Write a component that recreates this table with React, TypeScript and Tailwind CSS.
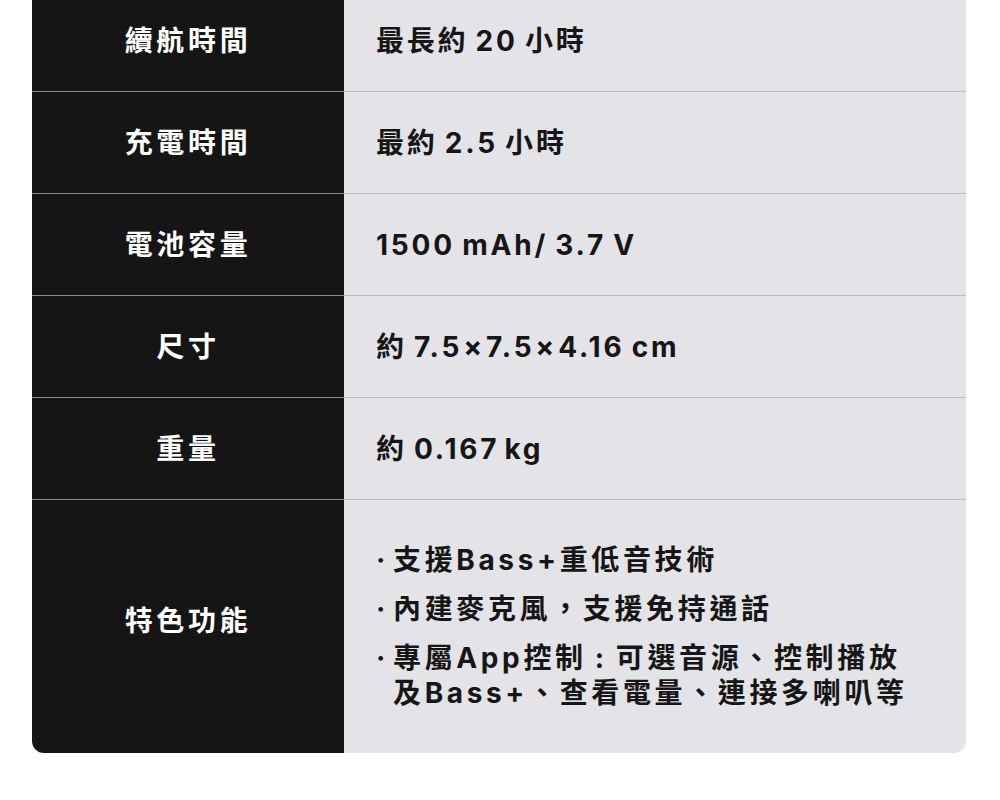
import React from 'react';

interface SpecRow {
  label: string;
  value: React.ReactNode;
}

const Times = () => <span className="mx-[1px]">×</span>;

// thin spaces keep CJK / latin runs apart like the original artwork
const rows: SpecRow[] = [
  { label: '續航時間', value: '最長約\u200920\u2009小時' },
  { label: '充電時間', value: '最約\u20092.5\u2009小時' },
  { label: '電池容量', value: '1500\u2009mAh/\u20093.7\u2009V' },
  {
    label: '尺寸',
    value: (
      <>
        約{'\u2009'}7.5<Times />7.5<Times />4.16{'\u2009'}cm
      </>
    ),
  },
  { label: '重量', value: '約\u20090.167\u200Akg' },
];

const features = [
  ['支援Bass+重低音技術'],
  ['內建麥克風，支援免持通話'],
  ['專屬App控制\u2009:\u2009可選音源、控制播放', '及Bass+、查看電量、連接多喇叭等'],
];

const fontStack = { fontFamily: 'Inter, "Noto Sans CJK TC", sans-serif' };

export default function App() {
  return (
    <div className="w-[1000px] h-[800px] bg-white overflow-hidden" style={fontStack}>
      <div className="w-[934px] ml-8 -mt-[10px] rounded-b-xl overflow-hidden">
        {rows.map((row) => (
          <div key={row.label} className="flex h-[102px]">
            <div className="w-[312px] shrink-0 bg-[#151515] border-b border-[#8d8d8d] flex items-center justify-center text-white text-[28px] font-bold tracking-[0.13em]">
              {row.label}
            </div>
            <div className="flex-1 bg-[#e4e3e7] border-b border-[#bdbcc1] flex items-center pl-8 text-[#161616] text-[28px] font-bold tracking-[0.1em]">
              {row.value}
            </div>
          </div>
        ))}

        {/* Features */}
        <div className="flex h-[253px]">
          <div className="w-[312px] shrink-0 bg-[#151515] flex items-center justify-center pb-[12px] text-white text-[28px] font-bold tracking-[0.13em]">
            特色功能
          </div>
          <div className="flex-1 bg-[#e4e3e7] flex flex-col justify-center gap-[14px] pl-8 text-[#161616] text-[28px] font-bold tracking-[0.13em] leading-[35px]">
            {features.map((lines, i) => (
              <div key={i} className="flex">
                <span className="w-[17px] shrink-0">·</span>
                <div>
                  {lines.map((l) => (
                    <div key={l}>{l}</div>
                  ))}
                </div>
              </div>
            ))}
          </div>
        </div>
      </div>
    </div>
  );
}
